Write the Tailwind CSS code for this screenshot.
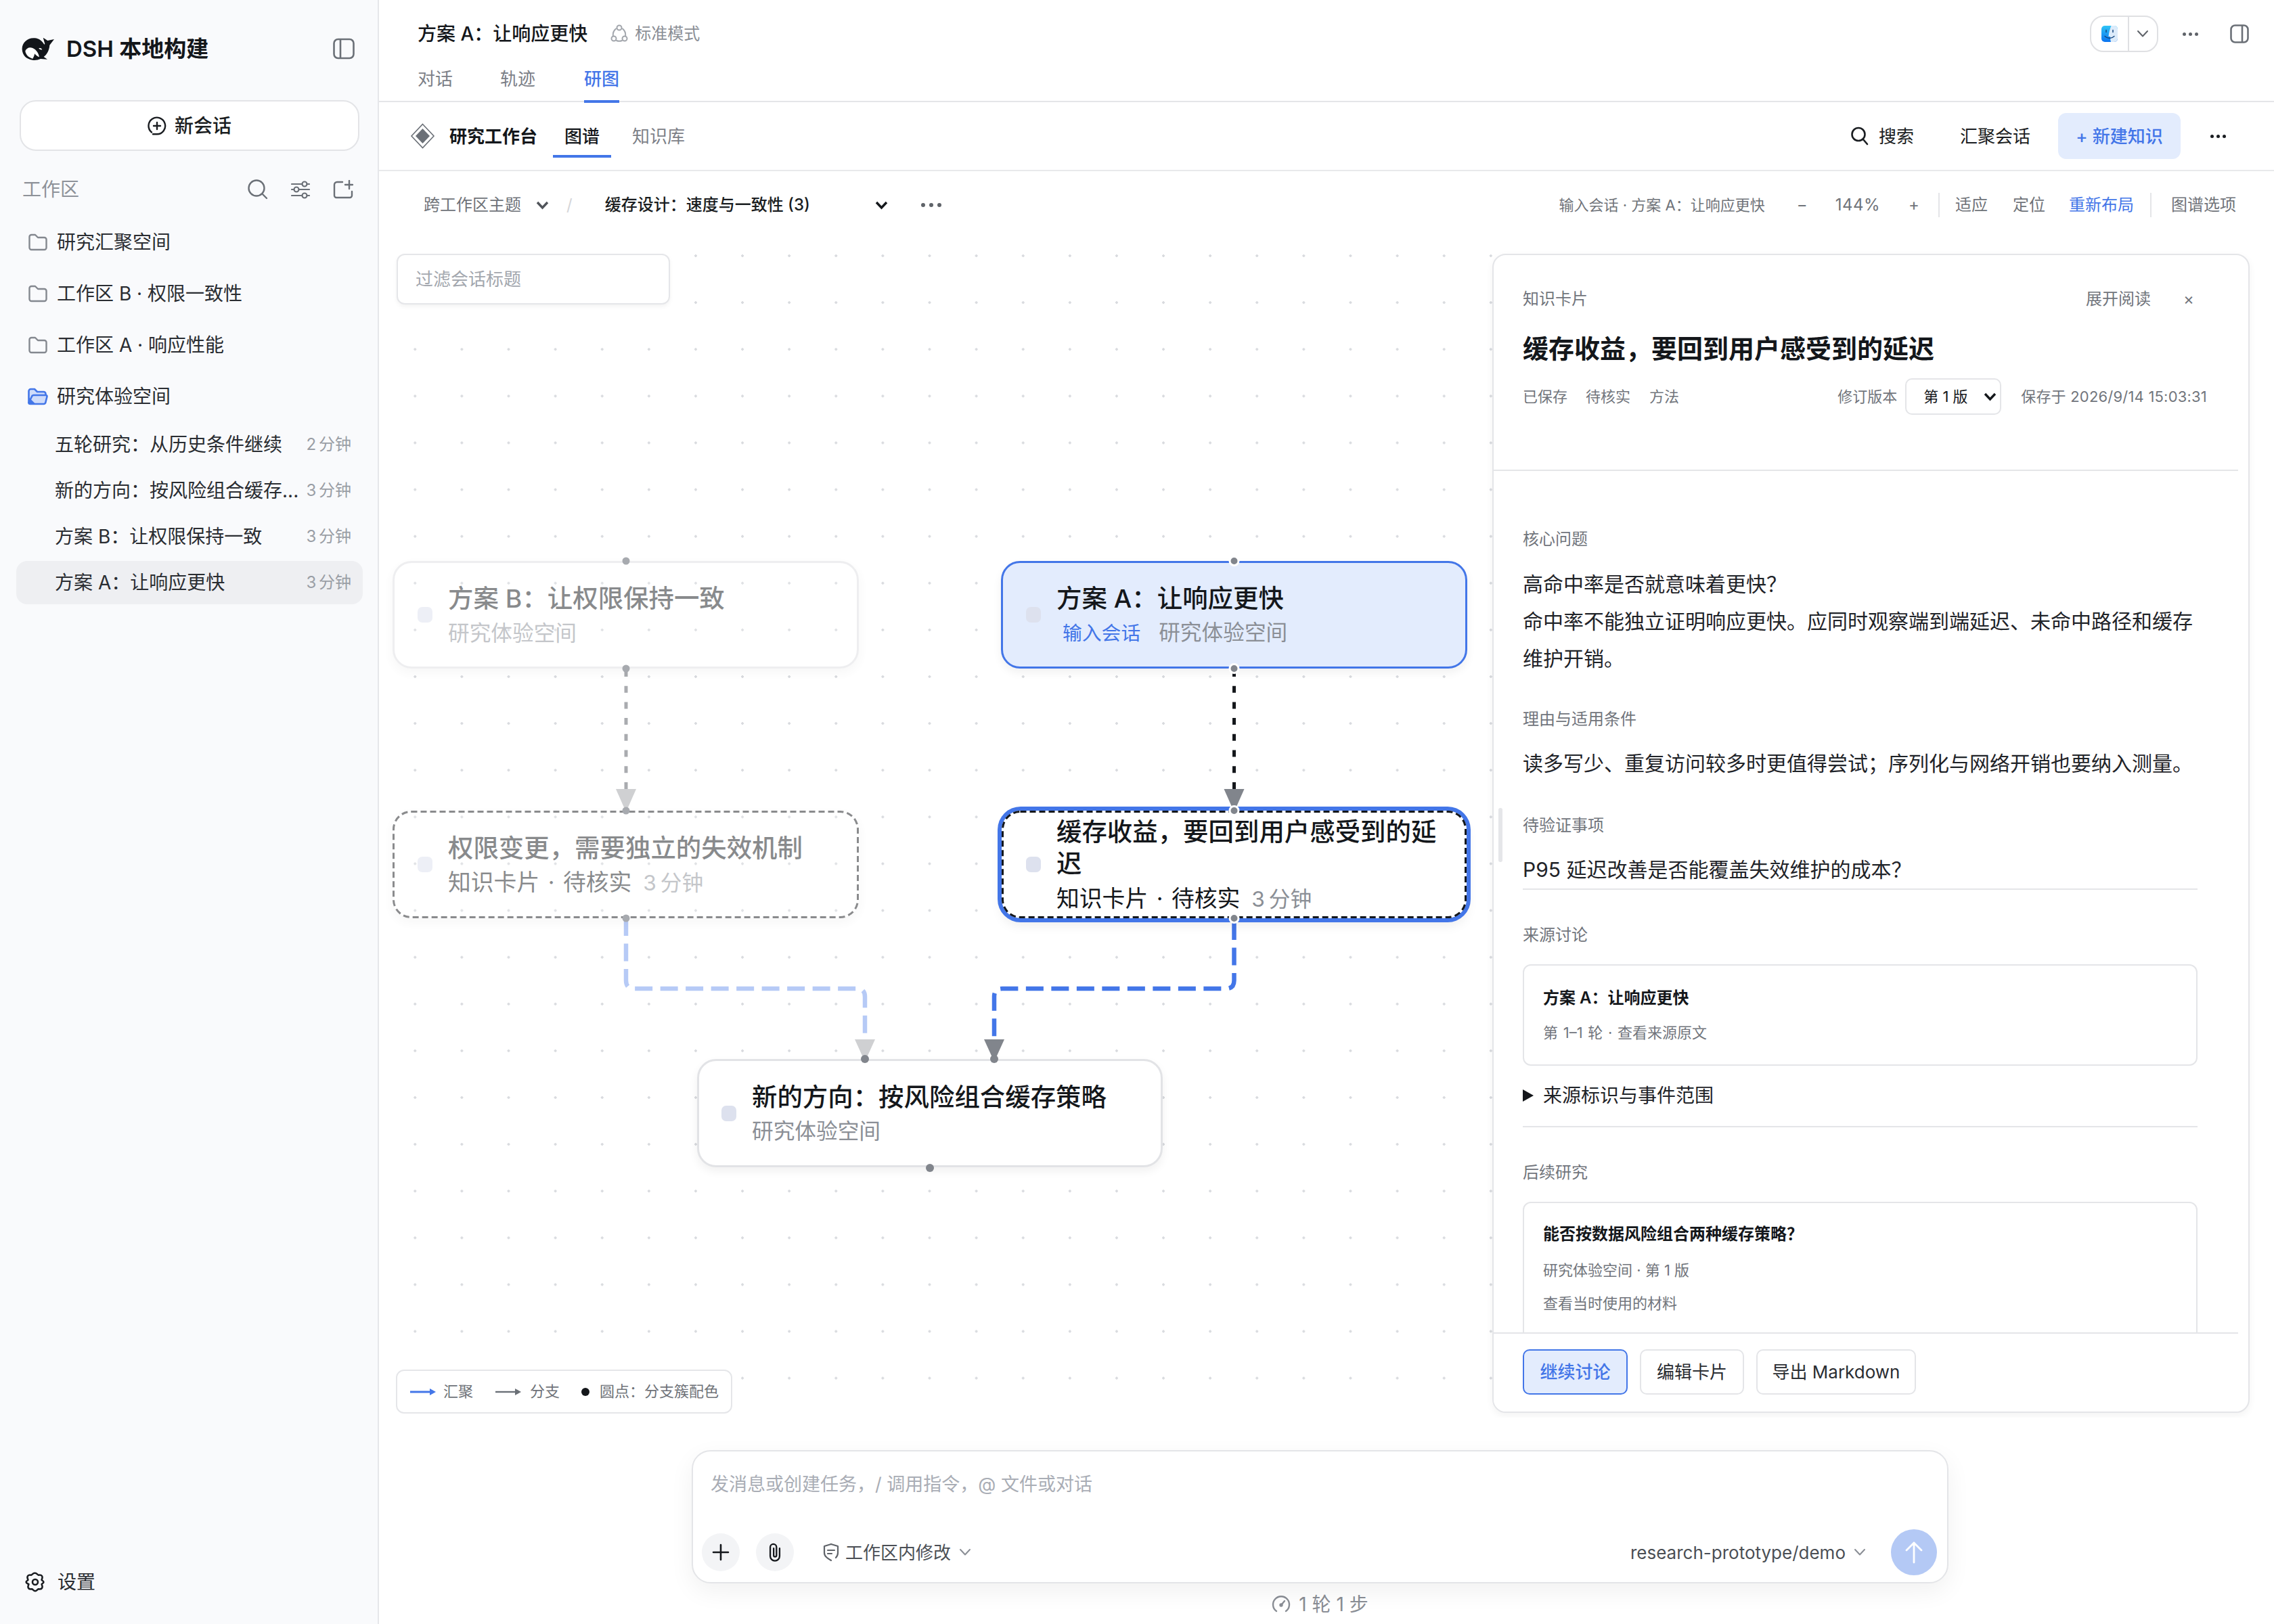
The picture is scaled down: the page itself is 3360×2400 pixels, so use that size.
<!DOCTYPE html>
<html lang="zh-CN">
<head>
<meta charset="utf-8">
<title>DSH 本地构建</title>
<script src="https://cdn.jsdelivr.net/npm/@tailwindcss/browser@4"></script>
</head>
<body class="font-[family-name:Inter,'Noto_Sans_CJK_SC',sans-serif] bg-white text-[#1a1d21]">
<div class="flex w-[3360px] h-[2400px] overflow-hidden">

<!-- Sidebar -->
<aside class="w-[560px] h-full shrink-0 flex flex-col bg-[#f9fafc] border-r-2 border-[#e6e7ea]">
  <div class="h-[144px] flex items-center justify-between pl-[32px] pr-[34px]">
    <div class="flex items-center gap-[18px]">
      <svg width="48" height="33" viewBox="36 30 144 99"><path fill="#12151a" d="M38 82C36 52 62 28 94 31c20 2 32 12 42 28l3-2-8-28 20 13 29-6-20 26c-2 24-12 41-26 52l16 11-30-2c-12 5-24 7-36 5C56 124 40 108 38 82z"/><path fill="#fff" d="M52 88c6-16 26-22 44-6 10 9 16 20 18 33-8-2-15-8-20-15-2 8-5 16-9 22C68 118 54 106 52 88z"/><path fill="#fff" d="M112 76c5-3 12-1 15 6-6 2-12-1-15-6z"/></svg>
      <span class="text-[33px] font-semibold leading-none text-[#14171b]">DSH 本地构建</span>
    </div>
    <svg width="32" height="32" viewBox="0 0 32 32" fill="none" stroke="#6b7077" stroke-width="2.6"><rect x="1.5" y="2" width="29" height="28" rx="6"/><path d="M11 2v28"/></svg>
  </div>

  <button class="ml-[29px] mt-[4px] w-[502px] h-[75px] shrink-0 rounded-[24px] border-2 border-[#e3e4e7] bg-white flex items-center justify-center gap-[12px] text-[28px] font-medium text-[#1a1d21]">
    <svg width="28" height="28" viewBox="0 0 28 28" fill="none" stroke="#1a1d21" stroke-width="2.4" stroke-linecap="round"><path d="M6 23.5A12.3 12.3 0 1 1 14 26.300H8"/><path d="M14 9v10M9 14h10"/></svg>
    新会话
  </button>

  <div class="mt-[27px] h-[60px] shrink-0 flex items-center pl-[33px] pr-[36px]">
    <span class="text-[28px] text-[#8e9299]">工作区</span>
    <div class="ml-auto flex items-center gap-[34px]">
      <svg width="30" height="30" viewBox="0 0 30 30" fill="none" stroke="#6b7077" stroke-width="2.4" stroke-linecap="round"><circle cx="13" cy="13" r="11.500"/><path d="M22 22l6 6"/></svg>
      <svg width="28" height="28" viewBox="0 0 28 28" fill="none" stroke="#6b7077" stroke-width="2.2" stroke-linecap="round"><path d="M1 6h15M24 6h3M1 14h3M12 14h15M1 23h15M24 23h3"/><circle cx="20" cy="6" r="3.500"/><circle cx="8" cy="14" r="3.500"/><circle cx="20" cy="23" r="3.500"/></svg>
      <svg width="30" height="28" viewBox="0 0 30 28" fill="none" stroke="#6b7077" stroke-width="2.4" stroke-linecap="round"><path d="M14 3H6a4 4 0 0 0-4 4v16a3 3 0 0 0 3 3h20a3 3 0 0 0 3-3V17"/><path d="M24 1v12M18 7h11"/></svg>
    </div>
  </div>

  <nav class="mt-[10px] flex flex-col shrink-0">
    <div class="h-[76px] flex items-center pl-[42px] gap-[14px] text-[28px] text-[#2a2d32]">
      <svg width="28" height="26" viewBox="0 0 28 26" fill="none" stroke="#84888f" stroke-width="2.4" stroke-linejoin="round"><path d="M1.500 5a3 3 0 0 1 3-3h5.500l4 4h9.500a3 3 0 0 1 3 3v12a3 3 0 0 1-3 3h-19a3 3 0 0 1-3-3z"/></svg>
      研究汇聚空间
    </div>
    <div class="h-[76px] flex items-center pl-[42px] gap-[14px] text-[28px] text-[#2a2d32]">
      <svg width="28" height="26" viewBox="0 0 28 26" fill="none" stroke="#84888f" stroke-width="2.4" stroke-linejoin="round"><path d="M1.500 5a3 3 0 0 1 3-3h5.500l4 4h9.500a3 3 0 0 1 3 3v12a3 3 0 0 1-3 3h-19a3 3 0 0 1-3-3z"/></svg>
      工作区 B · 权限一致性
    </div>
    <div class="h-[76px] flex items-center pl-[42px] gap-[14px] text-[28px] text-[#2a2d32]">
      <svg width="28" height="26" viewBox="0 0 28 26" fill="none" stroke="#84888f" stroke-width="2.4" stroke-linejoin="round"><path d="M1.500 5a3 3 0 0 1 3-3h5.500l4 4h9.500a3 3 0 0 1 3 3v12a3 3 0 0 1-3 3h-19a3 3 0 0 1-3-3z"/></svg>
      工作区 A · 响应性能
    </div>
    <div class="h-[76px] flex items-center pl-[41px] gap-[13px] text-[28px] text-[#2a2d32]">
      <svg width="30" height="26" viewBox="0 0 30 26" fill="#cfdcfa" stroke="#4376e8" stroke-width="2.600" stroke-linejoin="round"><path d="M1.500 23V5a3 3 0 0 1 3-3h5.500l4 4h9.500a3 3 0 0 1 3 3v2"/><path d="M1.500 22a2 2 0 0 0 2 2h20a3 3 0 0 0 3-3l2-8a2 2 0 0 0-2-2H9a3 3 0 0 0-3 2z" fill="#cfdcfa"/><path d="M1.500 14V24h10z" fill="#4376e8" stroke="none"/></svg>
      研究体验空间
    </div>
  </nav>

  <div class="mt-[1px] ml-[24px] w-[512px] flex flex-col gap-[4px] shrink-0">
    <div class="h-[64px] flex items-center justify-between pl-[57px] pr-[17px] rounded-[16px] text-[28px] text-[#2a2d32]"><span>五轮研究：从历史条件继续</span><span class="text-[24px] [word-spacing:-3px] text-[#9a9ea5]">2 分钟</span></div>
    <div class="h-[64px] flex items-center justify-between pl-[57px] pr-[17px] rounded-[16px] text-[28px] text-[#2a2d32]"><span>新的方向：按风险组合缓存...</span><span class="text-[24px] [word-spacing:-3px] text-[#9a9ea5]">3 分钟</span></div>
    <div class="h-[64px] flex items-center justify-between pl-[57px] pr-[17px] rounded-[16px] text-[28px] text-[#2a2d32]"><span>方案 B：让权限保持一致</span><span class="text-[24px] [word-spacing:-3px] text-[#9a9ea5]">3 分钟</span></div>
    <div class="h-[64px] flex items-center justify-between pl-[57px] pr-[17px] rounded-[16px] bg-[#eeeff2] text-[28px] text-[#2a2d32]"><span>方案 A：让响应更快</span><span class="text-[24px] [word-spacing:-3px] text-[#9a9ea5]">3 分钟</span></div>
  </div>

  <div class="mt-auto mb-[32px] h-[60px] flex items-center pl-[37px] gap-[18px] text-[28px] text-[#2a2d32]">
    <svg width="30" height="30" viewBox="0 0 30 30" fill="none" stroke="#1a1d21" stroke-width="2.600" stroke-linejoin="round"><path d="M15 1.800c2.400 0 3.200 2.400 5 2.900 2-.4 4.200-.4 5.200 1.700 1.200 2.100-.4 3.700-.6 5.400.4 1.300 2.800 1.300 2.800 3.200 0 1.900-2.400 1.900-2.800 3.200.2 1.700 1.800 3.300.6 5.400-1 2.100-3.200 2.100-5.200 1.700-1.800.5-2.600 2.900-5 2.900s-3.200-2.400-5-2.900c-2 .4-4.200.4-5.200-1.700-1.200-2.100.4-3.700.6-5.400C4 17.300 1.600 16.900 1.600 15s2.400-1.900 2.800-3.200C4.200 10.100 2.600 8.500 3.800 6.400c1-2.100 3.200-2.100 5.200-1.700 1.800-.5 2.600-2.900 5-2.900z"/><circle cx="15" cy="15" r="4"/></svg>
    设置
  </div>
</aside>

<!-- Main -->
<main class="flex-1 min-w-0 h-full flex flex-col">
  <!-- top header -->
  <header class="h-[151px] shrink-0 border-b-2 border-[#e4e5e8] flex flex-col">
    <div class="h-[100px] shrink-0 flex items-center pl-[57px] pr-[37px]">
      <span class="text-[28px] font-medium text-[#14171b]">方案 A：让响应更快</span>
      <span class="ml-[34px] flex items-center gap-[10px] text-[24px] text-[#8a8e95]">
        <svg width="26" height="28" viewBox="0 0 26 28" fill="none" stroke="#a2a6ac" stroke-width="2" stroke-linecap="round"><circle cx="13" cy="5" r="3.500"/><circle cx="5" cy="21" r="3.500"/><circle cx="21" cy="21" r="3.500"/><path d="M8 6.500C5 9 3.500 12.500 3.800 16.500M18 6.500c3 2.500 4.500 6 4.200 10M9 24c2.500 1 5.500 1 8 0"/></svg>
        标准模式
      </span>
      <div class="ml-auto flex items-center">
        <div class="w-[101px] h-[54px] rounded-[20px] border-2 border-[#dfe0e3] flex items-center">
          <div class="w-[56px] h-full flex items-center justify-center border-r-2 border-[#dfe0e3]">
            <svg width="24" height="24" viewBox="0 0 24 24"><defs><linearGradient id="fa" x1="0" y1="0" x2="0" y2="1"><stop offset="0" stop-color="#2fc4f6"/><stop offset="1" stop-color="#0a74f0"/></linearGradient></defs><rect width="24" height="24" rx="5" fill="url(#fa)"/><path d="M14.500 0H19a5 5 0 0 1 5 5v14a5 5 0 0 1-5 5h-5c-.8-3-1-5-1-8h-2.500c.5-6 2-11 4-16z" fill="#dcebfa"/><path d="M5 15.500c4 4 10 4 14 0" fill="none" stroke="#14457f" stroke-width="1.300" stroke-linecap="round"/><path d="M7 6.500v3M17 6.500v3" stroke="#14457f" stroke-width="1.500" stroke-linecap="round"/></svg>
          </div>
          <svg class="ml-[11px]" width="18" height="12" viewBox="0 0 18 12" fill="none" stroke="#5f6369" stroke-width="2" stroke-linecap="round" stroke-linejoin="round"><path d="M2 2l7 7.500L16 2"/></svg>
        </div>
        <div class="ml-[36px] flex gap-[4px]"><i class="block w-[5px] h-[5px] rounded-full bg-[#5f6369]"></i><i class="block w-[5px] h-[5px] rounded-full bg-[#5f6369]"></i><i class="block w-[5px] h-[5px] rounded-full bg-[#5f6369]"></i></div>
        <svg class="ml-[47px]" width="28" height="28" viewBox="0 0 28 28" fill="none" stroke="#6b7077" stroke-width="2.600"><rect x="1.500" y="1.500" width="25" height="25" rx="6"/><path d="M18 1.500v25"/></svg>
      </div>
    </div>
    <div class="h-[51px] shrink-0 flex pl-[57px] gap-[70px] text-[26px] text-[#7c8087]">
      <span class="h-[34px] leading-[34px]">对话</span>
      <span class="h-[34px] leading-[34px]">轨迹</span>
      <span class="ml-[2px] h-[52px] leading-[34px] text-[#4376e8] border-b-[4px] border-[#4376e8] font-medium">研图</span>
    </div>
  </header>

  <!-- workbench bar -->
  <div class="h-[102px] shrink-0 border-b-2 border-[#e8e9eb] flex items-center pl-[46px] pr-[71px]">
    <svg width="37" height="38" viewBox="0 0 37 38"><path d="M18.500 1.500L35 19 18.500 36.500 2 19z" fill="none" stroke="#6b7077" stroke-width="1.600"/><path d="M18.500 8L29 19 18.500 30 8 19z" fill="#6b7077"/></svg>
    <span class="ml-[21px] text-[26px] font-semibold text-[#14171b]">研究工作台</span>
    <div class="ml-[23px] h-[102px] px-[17px] flex flex-col justify-end"><span class="text-[26px] font-medium leading-[36px] text-[#14171b]">图谱</span><span class="mt-[9px] mb-[19px] -mx-[17px] block h-[4px] bg-[#4376e8]"></span></div>
    <div class="ml-[14px] h-[102px] px-[17px] flex flex-col justify-end"><span class="text-[26px] leading-[36px] text-[#7c8087]">知识库</span><span class="mt-[9px] mb-[19px] block h-[4px]"></span></div>
    <div class="ml-auto flex items-center text-[26px] text-[#1a1d21]">
      <svg width="26" height="28" viewBox="0 0 26 28" fill="none" stroke="#1a1d21" stroke-width="2.600" stroke-linecap="round"><circle cx="11" cy="11.500" r="9.500"/><path d="M18 19l6 7"/></svg>
      <span class="ml-[15px]">搜索</span>
      <span class="ml-[68px]">汇聚会话</span>
      <button class="ml-[41px] w-[181px] h-[68px] rounded-[12px] bg-[#e3ecfd] text-[#4376e8] font-medium text-[26px]">+ 新建知识</button>
      <div class="ml-[44px] flex gap-[4px]"><i class="block w-[5px] h-[5px] rounded-full bg-[#1a1d21]"></i><i class="block w-[5px] h-[5px] rounded-full bg-[#1a1d21]"></i><i class="block w-[5px] h-[5px] rounded-full bg-[#1a1d21]"></i></div>
    </div>
  </div>

  <!-- toolbar -->
  <div class="h-[92px] shrink-0 flex items-center pt-[8px] pl-[66px] pr-[56px] text-[24px] text-[#6f7379]">
    <span>跨工作区主题</span>
    <svg class="ml-[22px]" width="19" height="13" viewBox="0 0 19 13" fill="none" stroke="#50545a" stroke-width="3.400"><path d="M2 2l7.500 8L17 2"/></svg>
    <span class="ml-[26px] text-[#d5d6d9]">/</span>
    <span class="ml-[48px] w-[399px] font-medium text-[#1a1d21]">缓存设计：速度与一致性 (3)</span>
    <svg width="19" height="13" viewBox="0 0 19 13" fill="none" stroke="#14171b" stroke-width="3.400"><path d="M2 2l7.500 8L17 2"/></svg>
    <div class="ml-[49px] flex gap-[6px]"><i class="block w-[6px] h-[6px] rounded-full bg-[#5f6369]"></i><i class="block w-[6px] h-[6px] rounded-full bg-[#5f6369]"></i><i class="block w-[6px] h-[6px] rounded-full bg-[#5f6369]"></i></div>

    <span class="ml-auto text-[22px]">输入会话 · 方案 A：让响应更快</span>
    <span class="ml-[47px] w-[14px] text-center">−</span>
    <span class="ml-[43px] tracking-[0.5px]">144%</span>
    <span class="ml-[42px] w-[14px] text-center">+</span>
    <span class="ml-[30px] h-[36px] w-[2px] bg-[#e4e5e8]"></span>
    <span class="ml-[23px]">适应</span>
    <span class="ml-[37px]">定位</span>
    <span class="ml-[35px] text-[#4376e8]">重新布局</span>
    <span class="ml-[24px] h-[36px] w-[2px] bg-[#e4e5e8]"></span>
    <span class="ml-[29px]">图谱选项</span>
  </div>

  <!-- canvas -->
  <section class="relative h-[1750px] shrink-0 overflow-hidden bg-[radial-gradient(circle,#d9dbdf_1.6px,transparent_2.1px)] bg-size-[69.12px_69.12px] bg-position-[18.74px_-1.56px]">
    <div class="absolute left-[26px] top-[30px] w-[404px] h-[75px] rounded-[12px] border-2 border-[#e5e6e9] bg-white shadow-[0_3px_6px_rgba(0,0,0,0.05)] flex items-center pl-[26px] text-[26px] text-[#a3a7ae]">过滤会话标题</div>

    <!-- edges -->
    <svg class="absolute left-0 top-0" width="2800" height="1750" viewBox="560 345 2800 1750" fill="none">
      <path d="M925 990V1170" stroke="#a9abaf" stroke-width="5" stroke-dasharray="10 13.700"/>
      <path d="M1823.500 990V1170" stroke="#14171b" stroke-width="5" stroke-dasharray="10 13.700"/>
      <path d="M925 1357V1449q0 12 12 12H1266q12 0 12 12V1540" stroke="#b6caf6" stroke-width="6.500" stroke-dasharray="26 11.500"/>
      <path d="M1823.500 1363V1449q0 12-12 12H1481q-12 0-12 12V1540" stroke="#4376e8" stroke-width="6.500" stroke-dasharray="26 11.500"/>
    </svg>

    <!-- nodes -->
    <div class="absolute left-[20px] top-[484px] w-[689px] h-[159px] opacity-50 rounded-[28px] border-[3px] border-[#dedfe2] bg-white/40 shadow-[0_6px_14px_rgba(0,0,0,0.06)] flex items-center pl-[34px]">
      <span class="w-[22px] h-[23px] rounded-[7px] bg-[#dde1ee] shrink-0"></span>
      <div class="ml-[23px] pt-[4px]">
        <div class="text-[37.44px] leading-[46.8px] font-medium text-[#14171b]">方案 B：让权限保持一致</div>
        <div class="mt-[4px] text-[31.68px] leading-[46px] text-[#8b8f96]">研究体验空间</div>
      </div>
    </div>

    <div class="absolute left-[919px] top-[484px] w-[689px] h-[159px] rounded-[28px] border-[3px] border-[#4376e8] bg-[#e3ecfd] shadow-[0_6px_14px_rgba(0,0,0,0.06)] flex items-center pl-[34px]">
      <span class="w-[22px] h-[23px] rounded-[7px] bg-[#dde1ee] shrink-0"></span>
      <div class="ml-[23px] pt-[4px]">
        <div class="text-[37.44px] leading-[46.8px] font-medium text-[#14171b]">方案 A：让响应更快</div>
        <div class="mt-[4px] text-[31.68px] leading-[46px] text-[#8b8f96]"><span class="ml-[9px] text-[28.8px] text-[#4376e8]">输入会话</span><span class="ml-[27px]">研究体验空间</span></div>
      </div>
    </div>

    <div class="absolute left-[20px] top-[853px] w-[689px] h-[159px] opacity-50 rounded-[28px] border-[3px] border-transparent bg-white/40 shadow-[0_6px_14px_rgba(0,0,0,0.06)] flex items-center pl-[34px]">
      <span class="w-[22px] h-[23px] rounded-[7px] bg-[#dde1ee] shrink-0"></span>
      <div class="ml-[23px] pt-[4px]">
        <div class="text-[37.44px] leading-[46.8px] font-medium text-[#14171b]">权限变更，需要独立的失效机制</div>
        <div class="mt-[4px] text-[31.68px] leading-[46px] text-[#14171b]"><span class="text-[33.8px] [word-spacing:3px]">知识卡片 · 待核实</span><span class="ml-[17px] [word-spacing:-3px] text-[#8b8f96]">3 分钟</span></div>
      </div>
    </div>

    <div class="absolute left-[920px] top-[853px] w-[687px] h-[159px] rounded-[28px] border-[3px] border-transparent bg-white shadow-[0_0_0_6px_#4376e8,0_10px_18px_rgba(0,0,0,0.08)] flex items-center pl-[33px]">
      <span class="w-[22px] h-[23px] rounded-[7px] bg-[#dde1ee] shrink-0"></span>
      <div class="ml-[23px] w-[576px] pt-[4px]">
        <div class="text-[37.44px] leading-[46.8px] font-medium text-[#14171b]">缓存收益，要回到用户感受到的延迟</div>
        <div class="mt-[4px] text-[31.68px] leading-[46px] text-[#14171b]"><span class="text-[33.8px] [word-spacing:3px]">知识卡片 · 待核实</span><span class="ml-[17px] [word-spacing:-3px] text-[#8b8f96]">3 分钟</span></div>
      </div>
    </div>

    <div class="absolute left-[470px] top-[1220px] w-[688px] h-[160px] rounded-[28px] border-[3px] border-[#e2e3e6] bg-white shadow-[0_6px_14px_rgba(0,0,0,0.06)] flex items-center pl-[33px]">
      <span class="w-[22px] h-[23px] rounded-[7px] bg-[#dde1ee] shrink-0"></span>
      <div class="ml-[23px] pt-[4px]">
        <div class="text-[37.44px] leading-[46.8px] font-medium text-[#14171b]">新的方向：按风险组合缓存策略</div>
        <div class="mt-[4px] text-[31.68px] leading-[46px] text-[#8b8f96]">研究体验空间</div>
      </div>
    </div>

    <!-- dashed outlines, arrows and handles -->
    <svg class="absolute left-0 top-0" width="2800" height="1750" viewBox="560 345 2800 1750">
      <rect x="581.500" y="1199.500" width="686" height="156" rx="26" fill="none" stroke="#8a8b8d" stroke-width="3" stroke-dasharray="9 5"/>
      <rect x="1481.500" y="1199.500" width="684" height="156" rx="26" fill="none" stroke="#14171b" stroke-width="3" stroke-dasharray="9 5"/>
      <path d="M910 1166h30l-15 34z" fill="#cfd0d2"/>
      <path d="M1808.500 1166h30l-15 34z" fill="#81858c"/>
      <path d="M1263 1536h30l-15 33z" fill="#cfd0d2"/>
      <path d="M1454 1536h30l-15 33z" fill="#81858c"/>
      <g fill="#a7aaaf"><circle cx="925" cy="829" r="5.500"/><circle cx="925" cy="988" r="5.500"/><circle cx="925" cy="1198" r="5.500"/><circle cx="925" cy="1357" r="5.500"/></g>
      <g fill="#81858c" stroke="#fff" stroke-width="3"><circle cx="1823.500" cy="829" r="6.500"/><circle cx="1823.500" cy="988" r="6.500"/><circle cx="1823.500" cy="1198" r="6.500"/><circle cx="1823.500" cy="1357" r="6.500"/></g>
      <g fill="#81858c"><circle cx="1278" cy="1565" r="6"/><circle cx="1469" cy="1565" r="6"/><circle cx="1374" cy="1726" r="6"/></g>
    </svg>

    <!-- legend -->
    <div class="absolute left-[25px] top-[1679px] w-[497px] h-[65px] rounded-[12px] border-2 border-[#e5e6e9] bg-white flex items-center pl-[19px] text-[22px] text-[#6f7379]">
      <svg width="38" height="12" viewBox="0 0 38 12"><path d="M0 6h30" stroke="#4376e8" stroke-width="3"/><path d="M29 1l9 5-9 5z" fill="#4376e8"/></svg>
      <span class="ml-[11px]">汇聚</span>
      <svg class="ml-[33px]" width="38" height="12" viewBox="0 0 38 12"><path d="M0 6h30" stroke="#6b7077" stroke-width="2.400"/><path d="M29 1l9 5-9 5z" fill="#6b7077"/></svg>
      <span class="ml-[13px]">分支</span>
      <span class="ml-[32px] w-[12px] h-[12px] rounded-full bg-[#14171b]"></span>
      <span class="ml-[15px]">圆点：分支簇配色</span>
    </div>

    <!-- detail panel -->
    <aside class="absolute left-[1645px] top-[30px] w-[1119px] h-[1713px] rounded-[20px] border-2 border-[#e4e5e8] bg-white shadow-[0_4px_12px_rgba(0,0,0,0.05)] flex flex-col overflow-hidden">
      <span class="absolute left-[7px] top-[817px] w-[6px] h-[80px] rounded-full bg-[#e5e6e9]"></span>
      <div class="w-[1100px] h-[319px] shrink-0 border-b-2 border-[#e4e5e8] px-[43px]">
        <div class="mt-[45px] h-[40px] flex items-center text-[24px] text-[#71757c]">
          <span>知识卡片</span>
          <span class="ml-auto">展开阅读</span>
          <span class="ml-[48px] mr-[22px] text-[24px]">×</span>
        </div>
        <div class="mt-[25px] h-[56px] leading-[56px] text-[38px] font-semibold text-[#14171b]">缓存收益，要回到用户感受到的延迟</div>
        <div class="mt-[16px] h-[54px] flex items-center text-[22px] text-[#71757c]">
          <span>已保存</span>
          <span class="ml-[27px]">待核实</span>
          <span class="ml-[28px]">方法</span>
          <span class="ml-auto">修订版本</span>
          <div class="ml-[12px] w-[142px] h-[54px] rounded-[10px] border-2 border-[#e4e5e8] flex items-center pl-[25px] text-[#14171b]">第 1 版<svg class="ml-[23px]" width="19" height="13" viewBox="0 0 19 13" fill="none" stroke="#14171b" stroke-width="3.400"><path d="M2 2l7.500 8L17 2"/></svg></div>
          <span class="ml-[29px] mr-[3px] tracking-[0.2px]">保存于 2026/9/14 15:03:31</span>
        </div>
      </div>

      <div class="flex-1 min-h-0 w-[1100px] overflow-hidden pl-[43px] pr-[60px] pt-[84px]">
        <div class="h-[34px] leading-[34px] text-[24px] text-[#71757c]">核心问题</div>
        <p class="mt-[22px] text-[30px] leading-[55px] text-[#1f2328]">高命中率是否就意味着更快？<br>命中率不能独立证明响应更快。应同时观察端到端延迟、未命中路径和缓存维护开销。</p>
        <div class="mt-[45px] h-[34px] leading-[34px] text-[24px] text-[#71757c]">理由与适用条件</div>
        <p class="mt-[21px] text-[30px] leading-[55px] text-[#1f2328]">读多写少、重复访问较多时更值得尝试；序列化与网络开销也要纳入测量。</p>
        <div class="mt-[47px] h-[34px] leading-[34px] text-[24px] text-[#71757c]">待验证事项</div>
        <p class="mt-[21px] border-b-2 border-[#e4e5e8] text-[30px] leading-[55px] text-[#1f2328]">P95 延迟改善是否能覆盖失效维护的成本？</p>
        <div class="mt-[50px] h-[34px] leading-[34px] text-[24px] text-[#71757c]">来源讨论</div>
        <div class="mt-[26px] h-[150px] rounded-[12px] border-2 border-[#e4e5e8] pl-[28px] pt-[31px]">
          <div class="h-[34px] leading-[34px] text-[24px] font-semibold text-[#14171b]">方案 A：让响应更快</div>
          <div class="mt-[17px] h-[34px] leading-[34px] text-[22px] [word-spacing:1.500px] text-[#71757c]">第 1–1 轮 · 查看来源原文</div>
        </div>
        <div class="mt-[20px] h-[47px] flex items-center text-[28px] text-[#1f2328]">
          <svg width="16" height="18" viewBox="0 0 16 18"><path d="M0 0l16 9-16 9z" fill="#14171b"/></svg>
          <span class="ml-[14px]">来源标识与事件范围</span>
        </div>
        <div class="mt-[22px] h-[2px] bg-[#e4e5e8]"></div>
        <div class="mt-[50px] h-[34px] leading-[34px] text-[24px] text-[#71757c]">后续研究</div>
        <div class="mt-[26px] h-[260px] rounded-[12px] border-2 border-[#e4e5e8] pl-[28px] pt-[29px]">
          <div class="h-[34px] leading-[34px] text-[24px] font-semibold text-[#14171b]">能否按数据风险组合两种缓存策略？</div>
          <div class="mt-[19px] h-[34px] leading-[34px] text-[22px] text-[#71757c]">研究体验空间 · 第 1 版</div>
          <div class="mt-[15px] h-[34px] leading-[34px] text-[22px] text-[#71757c]">查看当时使用的材料</div>
        </div>
      </div>

      <div class="w-[1100px] h-[117px] shrink-0 border-t-2 border-[#e4e5e8] bg-white flex items-start pt-[23px] pl-[43px] gap-[18px] text-[26px] text-[#2a2d32]">
        <button class="w-[155px] h-[67px] rounded-[10px] border-2 border-[#4376e8] bg-[#e3ecfd] text-[#4376e8] font-medium">继续讨论</button>
        <button class="w-[154px] h-[67px] rounded-[10px] border-2 border-[#e4e5e8] bg-white">编辑卡片</button>
        <button class="w-[236px] h-[67px] rounded-[10px] border-2 border-[#e4e5e8] bg-white">导出 Markdown</button>
      </div>
    </aside>
  </section>

  <!-- composer -->
  <div class="ml-[462px] w-[1857px] pt-[48px]">
    <div class="h-[197px] rounded-[28px] border-2 border-[#e4e5e8] bg-white shadow-[0_12px_36px_rgba(0,0,0,0.06)] relative flex flex-col">
      <div class="pl-[26px] pt-[28px] h-[114px] text-[27px] leading-[42px] text-[#a9adb5]">发消息或创建任务，/ 调用指令，@ 文件或对话</div>
      <div class="flex items-center pl-[13px] pr-[15px] h-[70px]">
        <span class="w-[56px] h-[56px] rounded-full bg-[#f3f4f6] flex items-center justify-center"><svg width="26" height="26" viewBox="0 0 26 26" stroke="#14171b" stroke-width="2.600" stroke-linecap="round"><path d="M13 2v22M2 13h22"/></svg></span>
        <span class="ml-[24px] w-[56px] h-[56px] rounded-full bg-[#f3f4f6] flex items-center justify-center"><svg width="28" height="30" viewBox="0 0 24 26" fill="none" stroke="#14171b" stroke-width="2" stroke-linecap="round"><path d="M18 8v10a6 6 0 0 1-12 0V6.500a4 4 0 0 1 8 0V17a1.800 1.800 0 0 1-3.600 0V8"/></svg></span>
        <svg class="ml-[42px]" width="26" height="28" viewBox="0 0 26 28" fill="none" stroke="#5f6369" stroke-width="2.200" stroke-linejoin="round" stroke-linecap="round"><path d="M13 2l10 3v10c0 3-1 5-3 7M13 2L3 5v10c0 5 5 8 10 11"/><path d="M8 11h10M8 16h6"/></svg>
        <span class="ml-[8px] text-[26px] text-[#4b4f55]">工作区内修改</span>
        <svg class="ml-[12px]" width="18" height="12" viewBox="0 0 18 12" fill="none" stroke="#8a8e95" stroke-width="2" stroke-linecap="round" stroke-linejoin="round"><path d="M2 2l7 7.500L16 2"/></svg>
        <span class="ml-auto text-[26px] text-[#4b4f55]">research-prototype/demo</span>
        <svg class="ml-[12px]" width="18" height="12" viewBox="0 0 18 12" fill="none" stroke="#8a8e95" stroke-width="2" stroke-linecap="round" stroke-linejoin="round"><path d="M2 2l7 7.500L16 2"/></svg>
        <span class="ml-[37px] w-[68px] h-[68px] rounded-full bg-[#b4c9f5] flex items-center justify-center"><svg width="30" height="34" viewBox="0 0 30 34" fill="none" stroke="#fff" stroke-width="2.800" stroke-linecap="round" stroke-linejoin="round"><path d="M15 32V3M4 14L15 3l11 11"/></svg></span>
      </div>
    </div>
    <div class="mt-[10px] flex items-center justify-center gap-[12px] text-[28px] text-[#8a8e95]">
      <svg width="28" height="28" viewBox="0 0 28 28" fill="none" stroke="#8a8e95" stroke-width="2.400" stroke-linecap="round"><path d="M7 24A12 12 0 1 1 21 24"/><path d="M14 15l5-6"/><circle cx="14" cy="15" r="1.500"/></svg>
      <span>1 轮 1 步</span>
    </div>
  </div>
</main>
</div>
</body>
</html>
